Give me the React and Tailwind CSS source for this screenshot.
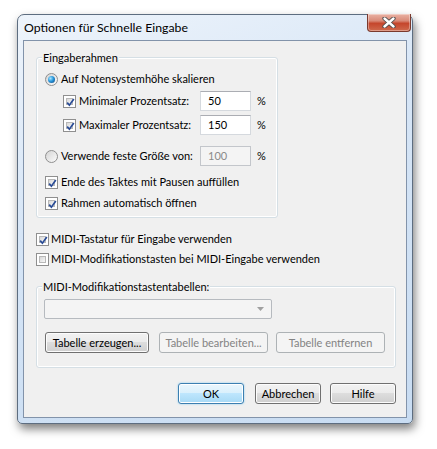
import React from 'react';

function CheckBox({ checked }) {
  return (
    <span className="relative w-[13px] h-[13px] shrink-0 border border-[#8f8f8f] bg-white p-[2px] block">
      <span className="block w-full h-full border border-[#b8b8b8] bg-[linear-gradient(135deg,#d8d8d8,#f8f8f8)]" />
      {checked && (
        <svg className="absolute left-[1px] top-[1px]" width="11" height="11" viewBox="0 0 11 11">
          <path d="M2.2 5.6 L4.4 8.2 L8.8 2" fill="none" stroke="#2a4c96" strokeWidth="1.7" />
        </svg>
      )}
    </span>
  );
}

function Radio({ checked }) {
  return (
    <span className="w-[13px] h-[13px] shrink-0 rounded-full border border-[#8f8f8f] bg-[linear-gradient(135deg,#d4d4d4,#fbfbfb)] flex items-center justify-center">
      {checked && (
        <span className="w-[7px] h-[7px] rounded-full bg-[radial-gradient(circle_at_35%_35%,#a8e6ff,#2a98dc_45%,#0b3f78)]" />
      )}
    </span>
  );
}

function Field({ value, disabled }) {
  return (
    <div
      className={
        disabled
          ? 'w-[51px] h-[20px] shrink-0 border border-[#c3c6cb] bg-[#f4f4f4] text-[#8a8a8a] pl-[7px] flex items-center'
          : 'w-[51px] h-[20px] shrink-0 border border-[#d5d9de] border-t-[#abadb3] bg-white text-black pl-[7px] flex items-center'
      }
    >
      {value}
    </div>
  );
}

function Button({ children, w, kind }) {
  const base = 'h-[21px] rounded-[3px] flex items-center justify-center border whitespace-nowrap ';
  let cls = 'border-[#707070] bg-[linear-gradient(#f2f2f2_0%,#ebebeb_50%,#dddddd_50%,#cfcfcf_100%)] shadow-[inset_0_0_0_1px_#fcfcfc] text-black';
  if (kind === 'default') {
    cls = 'border-[#3c7fb1] bg-[linear-gradient(#eaf6fd_0%,#d9f0fc_50%,#bee6fd_50%,#a7d9f5_100%)] shadow-[inset_0_0_0_1px_#ffffff,0_0_2px_#7fc8f0] text-black';
  } else if (kind === 'disabled') {
    cls = 'border-[#adb2b5] bg-[#f4f4f4] text-[#838383]';
  }
  return (
    <div className={base + cls} style={{ width: w }}>
      {children}
    </div>
  );
}

export default function App() {
  return (
    <div className="w-[437px] h-[449px] bg-white pt-[14px] pl-[17px] font-['Lato',sans-serif] text-[11px] leading-[16px] text-black whitespace-nowrap">
      <div className="w-[396px] h-[410px] border border-[#5d6d80] rounded-t-[7px] rounded-b-[5px] bg-[linear-gradient(160deg,#eef4fb_0%,#d6e5f6_40%,#c8dcf2_100%)] shadow-[2px_5px_10px_rgba(0,0,0,0.5)] flex flex-col">
        <div className="h-[25px] flex items-start shrink-0">
          <div className="pl-[6px] pt-[5px] text-[12.3px]">Optionen für Schnelle Eingabe</div>
          <div className="ml-auto mr-[1px] -mt-[1px] w-[44px] h-[18px] rounded-b-[4px] border border-t-0 border-[#7a3a2e] bg-[linear-gradient(#eab2a4_0%,#d98a78_40%,#c5462c_55%,#cf6a4e_100%)] shadow-[inset_0_0_0_1px_rgba(255,255,255,0.35)] flex items-center justify-center">
            <svg width="16" height="11" viewBox="0 0 16 11">
              <path d="M3.5 1.5 L12.5 9.5 M12.5 1.5 L3.5 9.5" stroke="#4a4a4a" strokeWidth="4.2" strokeLinecap="round" />
              <path d="M3.5 1.5 L12.5 9.5 M12.5 1.5 L3.5 9.5" stroke="#ffffff" strokeWidth="2.4" strokeLinecap="round" />
            </svg>
          </div>
        </div>

        <div className="mx-[5px] h-[378px] border border-[#8293aa] bg-[#f0f0f0] flex flex-col">
          <div className="ml-[12px] mt-[16px] w-[242px] border border-[#d5dfe5] rounded-[3px] shadow-[inset_0_0_0_1px_#ffffff] flex flex-col pl-[8px] pb-[4px]">
            <div className="-mt-[8px] -ml-[3px] px-[1px] w-fit bg-[#f0f0f0]">Eingaberahmen</div>
            <div className="mt-[3px] h-[20px] flex items-center">
              <Radio checked />
              <span className="ml-[3px]">Auf Notensystemhöhe skalieren</span>
            </div>
            <div className="mt-[2px] h-[20px] flex items-center">
              <div className="w-[155px] shrink-0 pl-[18px] flex items-center">
                <CheckBox checked />
                <span className="ml-[3px]">Minimaler Prozentsatz:</span>
              </div>
              <Field value="50" />
              <span className="ml-[6px]">%</span>
            </div>
            <div className="mt-[4px] h-[20px] flex items-center">
              <div className="w-[155px] shrink-0 pl-[18px] flex items-center">
                <CheckBox checked />
                <span className="ml-[3px]">Maximaler Prozentsatz:</span>
              </div>
              <Field value="150" />
              <span className="ml-[6px]">%</span>
            </div>
            <div className="mt-[11px] h-[20px] flex items-center">
              <div className="w-[155px] shrink-0 flex items-center">
                <Radio />
                <span className="ml-[3px]">Verwende feste Größe von:</span>
              </div>
              <Field value="100" disabled />
              <span className="ml-[6px]">%</span>
            </div>
            <div className="mt-[6px] h-[20px] flex items-center">
              <CheckBox checked />
              <span className="ml-[3px]">Ende des Taktes mit Pausen auffüllen</span>
            </div>
            <div className="mt-[1px] h-[20px] flex items-center">
              <CheckBox checked />
              <span className="ml-[3px]">Rahmen automatisch öffnen</span>
            </div>
          </div>

          <div className="ml-[12px] mt-[11px] h-[20px] flex items-center">
            <CheckBox checked />
            <span className="ml-[2px]">MIDI-Tastatur für Eingabe verwenden</span>
          </div>
          <div className="ml-[12px] h-[20px] flex items-center">
            <CheckBox />
            <span className="ml-[2px]">MIDI-Modifikationstasten bei MIDI-Eingabe verwenden</span>
          </div>

          <div className="ml-[12px] mt-[17px] w-[360px] border border-[#d5dfe5] rounded-[3px] shadow-[inset_0_0_0_1px_#ffffff] flex flex-col pl-[7px] pb-[14px]">
            <div className="-mt-[8px] -ml-[2px] px-[1px] w-fit bg-[#f0f0f0]">MIDI-Modifikationstastentabellen:</div>
            <div className="mt-[4px] w-[228px] h-[20px] border border-[#b6babf] rounded-[2px] bg-[#f4f4f4] flex items-center justify-end pr-[7px]">
              <svg width="7" height="4" viewBox="0 0 7 4">
                <path d="M0 0 L7 0 L3.5 4 Z" fill="#a0a0a0" />
              </svg>
            </div>
            <div className="mt-[13px] ml-[1px] flex">
              <Button w="104px">Tabelle erzeugen...</Button>
              <div className="ml-[10px]">
                <Button w="109px" kind="disabled">Tabelle bearbeiten...</Button>
              </div>
              <div className="ml-[8px]">
                <Button w="109px" kind="disabled">Tabelle entfernen</Button>
              </div>
            </div>
          </div>

          <div className="mt-[15px] flex pl-[154px]">
            <Button w="66px" kind="default">OK</Button>
            <div className="ml-[11px]">
              <Button w="66px">Abbrechen</Button>
            </div>
            <div className="ml-[9px]">
              <Button w="66px">Hilfe</Button>
            </div>
          </div>
        </div>
      </div>
    </div>
  );
}
